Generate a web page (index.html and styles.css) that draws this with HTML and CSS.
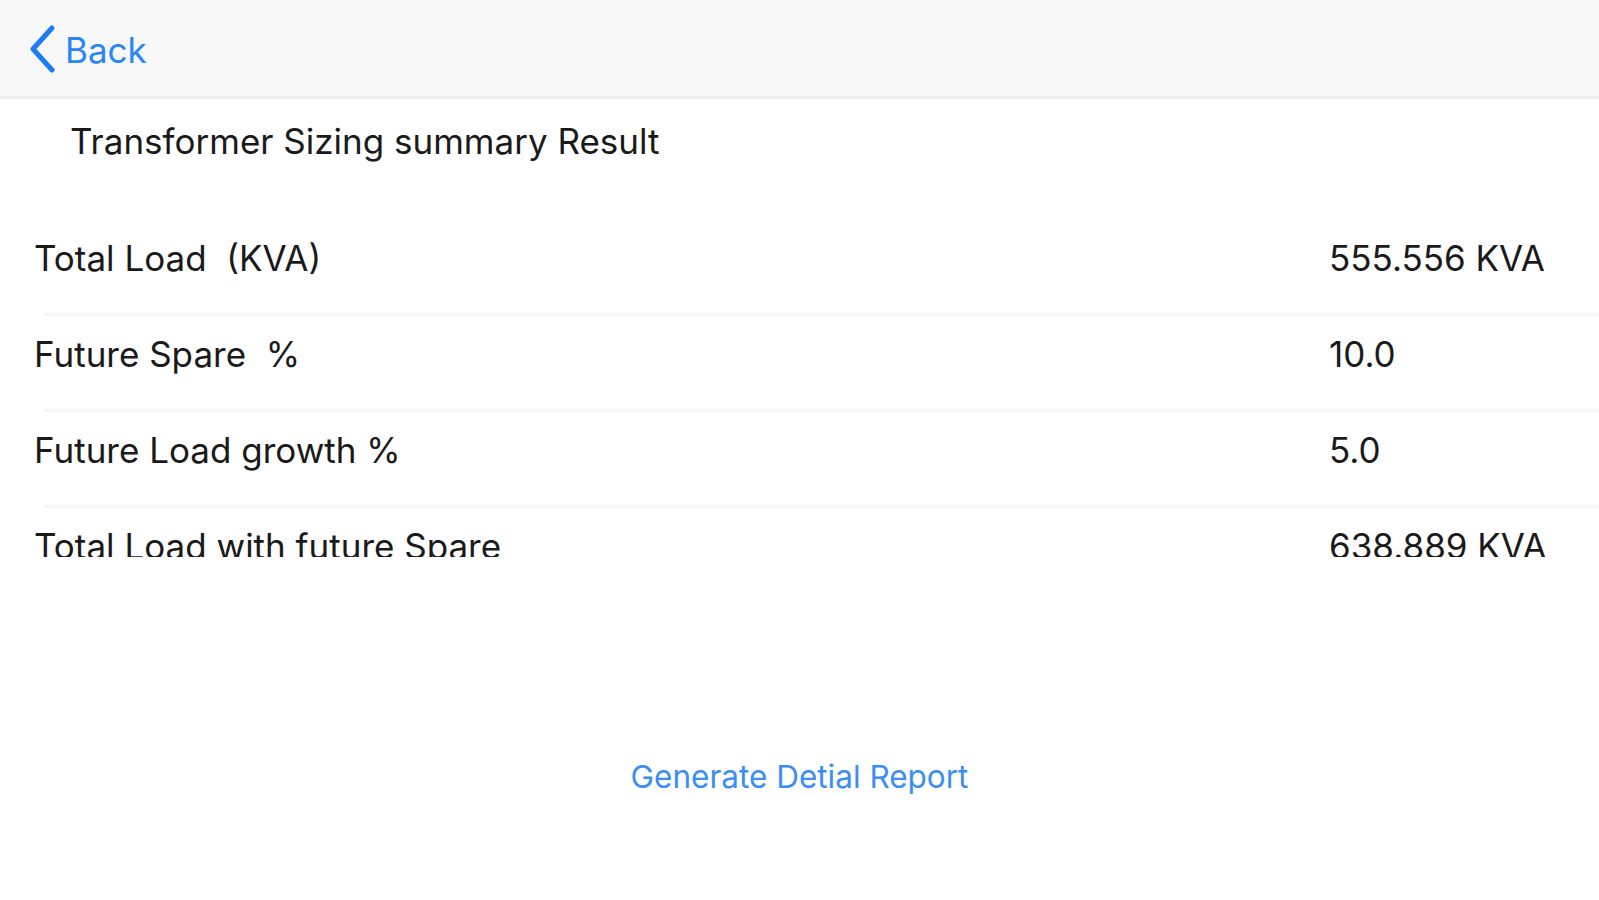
FILE: index.html
```html
<!DOCTYPE html>
<html lang="en">
<head>
<meta charset="utf-8">
<title>Transformer Sizing summary Result</title>
<link rel="stylesheet" href="styles.css">
</head>
<body>
<header class="navbar">
  <a class="back" href="#">
    <svg class="chevron" width="28" height="48" viewBox="0 0 28 48"><path d="M24 3 L5 24 L24 45" fill="none" stroke="#1b7cf4" stroke-width="5" stroke-linecap="round" stroke-linejoin="round"/></svg>
    <span class="back-label">Back</span>
  </a>
</header>
<main class="content">
  <h1 class="title">Transformer Sizing summary Result</h1>
  <div class="table">
    <div class="row"><span class="label">Total Load&nbsp; (KVA)</span><span class="value">555.556 KVA</span></div>
    <div class="row"><span class="label">Future Spare&nbsp; %</span><span class="value">10.0</span></div>
    <div class="row"><span class="label">Future Load growth %</span><span class="value">5.0</span></div>
    <div class="row"><span class="label">Total Load with future Spare</span><span class="value">638.889 KVA</span></div>
  </div>
  <div class="actions">
    <a class="report" href="#">Generate Detial Report</a>
  </div>
</main>
</body>
</html>
```
FILE: styles.css
```css
* { box-sizing: border-box; }
html, body {
  margin: 0;
  padding: 0;
  background: #ffffff;
  font-family: Inter, "Liberation Sans", sans-serif;
  color: #1a1a1a;
}
.navbar {
  height: 99px;
  background: #f8f8f8;
  border-bottom: 3px solid #ececec;
  display: flex;
  align-items: center;
  padding-left: 28px;
}
.back {
  display: flex;
  align-items: center;
  gap: 9px;
  text-decoration: none;
  color: #2a86f3;
  margin-top: 2px;
}
.chevron { display: block; }
.back-label {
  font-size: 35px;
  line-height: 40px;
  margin-top: 2px;
}
.title {
  margin: 0;
  font-weight: normal;
  font-size: 35px;
  line-height: 40px;
  padding: 22px 0 59px 70px;
  color: #1a1a1a;
}
.table {
  height: 337px;
  overflow: hidden;
}
.row {
  display: flex;
  align-items: center;
  height: 96px;
  padding-bottom: 20px;
  position: relative;
}
.row::after {
  content: "";
  position: absolute;
  left: 44px;
  right: 0;
  bottom: 0;
  height: 3px;
  background: #f6f6f6;
}
.label {
  width: 1329px;
  padding-left: 34px;
  font-size: 35px;
  line-height: 40px;
}
.value {
  font-size: 35px;
  line-height: 40px;
}
.actions {
  display: flex;
  justify-content: center;
  padding-top: 200px;
}
.report {
  font-size: 31.5px;
  line-height: 40px;
  color: #3b8ef3;
  text-decoration: none;
  margin-left: 0;
}
```
